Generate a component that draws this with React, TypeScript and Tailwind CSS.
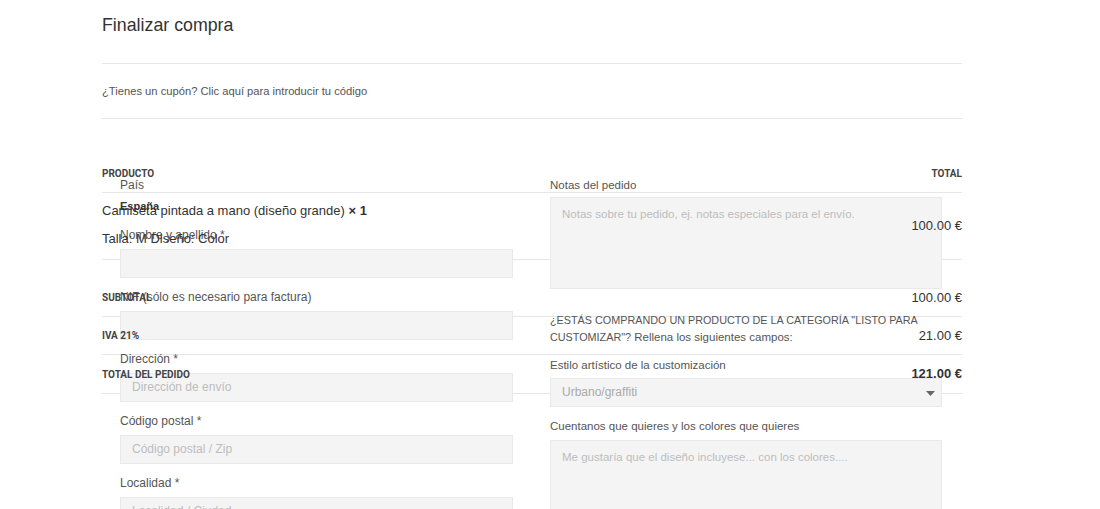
import React from "react";

const sans = { fontFamily: '"Liberation Sans", Arial, sans-serif' };
const rob = { fontFamily: 'Roboto, "Liberation Sans", sans-serif' };

function Field({ label, placeholder }: { label: string; placeholder?: string }) {
  return (
    <div className="mb-[11px]">
      <div className="h-[17px] text-[12px] leading-[17px] text-[#555] mb-[5px]">{label}</div>
      <div className="h-[29px] bg-[#f4f4f4] border border-[#e9e9e9] px-[11px] text-[12px] leading-[27px] text-[#bdbdbd]">
        {placeholder}
      </div>
    </div>
  );
}

export default function App() {
  return (
    <div className="w-full min-h-[509px] bg-white overflow-hidden" style={sans}>
      <div className="ml-[102px] w-[860px]">
        <h1 className="pt-[14px] text-[17.8px] leading-[22px] text-[#333] font-normal">Finalizar compra</h1>
        <div className="mt-[27px] border-t border-[#e6e6e6]" />
        <div className="h-[54px] flex items-center text-[11.2px] text-[#555]">
          ¿Tienes un cupón? Clic aquí para introducir tu código
        </div>
        <div className="border-t border-[#e6e6e6]" />

        <div className="relative mt-[42px]">
          {/* order table */}
          <div className="text-[#333]">
            <div className="flex justify-between h-[32px] pt-[7px] border-b border-[#e6e6e6] text-[10px] font-bold leading-[12px] text-[#444]" style={rob}>
              <span className="relative z-10">PRODUCTO</span>
              <span className="relative z-10">TOTAL</span>
            </div>
            <div className="flex justify-between items-center h-[67px] border-b border-[#e6e6e6] text-[13px]">
              <div className="relative z-10 leading-[28px] pb-[2px]">
                <div>
                  Camiseta pintada a mano (diseño grande) <strong>× 1</strong>
                </div>
                <div>Talla: M Diseño: Color</div>
              </div>
              <span className="relative z-10">100.00 €</span>
            </div>
            <div className="flex justify-between items-center h-[38px] mt-[19px] border-b border-[#e6e6e6]">
              <span className="relative z-10 text-[10px] font-bold text-[#444]" style={rob}>SUBTOTAL</span>
              <span className="relative z-10 text-[13px]">100.00 €</span>
            </div>
            <div className="flex justify-between items-center h-[38px] border-b border-[#e6e6e6]">
              <span className="relative z-10 text-[10px] font-bold text-[#444]" style={rob}>IVA 21%</span>
              <span className="relative z-10 text-[13px]">21.00 €</span>
            </div>
            <div className="flex justify-between items-center h-[39px] border-b border-[#e6e6e6]">
              <span className="relative z-10 text-[10px] font-bold text-[#444]" style={rob}>TOTAL DEL PEDIDO</span>
              <span className="relative z-10 text-[13px] font-bold">121.00 €</span>
            </div>
          </div>

          {/* overlapping form */}
          <div className="absolute z-0 left-[18px] top-[15.5px] w-[840px] flex gap-[37px]">
            <div className="w-[393px]">
              <div className="h-[17px] text-[12px] leading-[17px] text-[#555]">País</div>
              <div className="h-[17px] mt-[4px] text-[11px] font-bold leading-[17px] text-[#333]">España</div>
              <div className="mt-[12px]">
                <Field label="Nombre y apellido *" />
                <Field label="NIF (sólo es necesario para factura)" />
                <Field label="Dirección *" placeholder="Dirección de envío" />
                <Field label="Código postal *" placeholder="Código postal / Zip" />
                <Field label="Localidad *" placeholder="Localidad / Ciudad" />
              </div>
            </div>
            <div className="w-[392px]">
              <div className="h-[17px] text-[11.5px] leading-[17px] text-[#555] mb-[3px]">Notas del pedido</div>
              <div className="h-[92px] bg-[#f4f4f4] border border-[#e9e9e9] px-[11px] pt-[8px] text-[11.5px] text-[#bdbdbd]">
                Notas sobre tu pedido, ej. notas especiales para el envío.
              </div>
              <p className="mt-[23px] text-[11.5px] leading-[17px] text-[#555]">
                <span className="text-[10.8px]">¿ESTÁS COMPRANDO UN PRODUCTO DE LA CATEGORÍA "LISTO PARA CUSTOMIZAR"?</span> Rellena los siguientes campos:
              </p>
              <div className="mt-[11px] h-[17px] text-[11.5px] leading-[17px] text-[#555] mb-[4px]">Estilo artístico de la customización</div>
              <div className="relative h-[29px] bg-[#f4f4f4] border border-[#e9e9e9] px-[11px] text-[12px] leading-[27px] text-[#aaa]">
                Urbano/graffiti
                <svg className="absolute right-[6px] top-[12px]" width="9" height="5" viewBox="0 0 9 5">
                  <path d="M0 0 H9 L4.5 5 Z" fill="#666" />
                </svg>
              </div>
              <div className="mt-[11px] h-[17px] text-[11.5px] leading-[17px] text-[#555] mb-[5px]">Cuentanos que quieres y los colores que quieres</div>
              <div className="h-[92px] bg-[#f4f4f4] border border-[#e9e9e9] px-[11px] pt-[8px] text-[11.5px] text-[#bdbdbd]">
                Me gustaría que el diseño incluyese... con los colores....
              </div>
            </div>
          </div>
        </div>
      </div>
    </div>
  );
}
